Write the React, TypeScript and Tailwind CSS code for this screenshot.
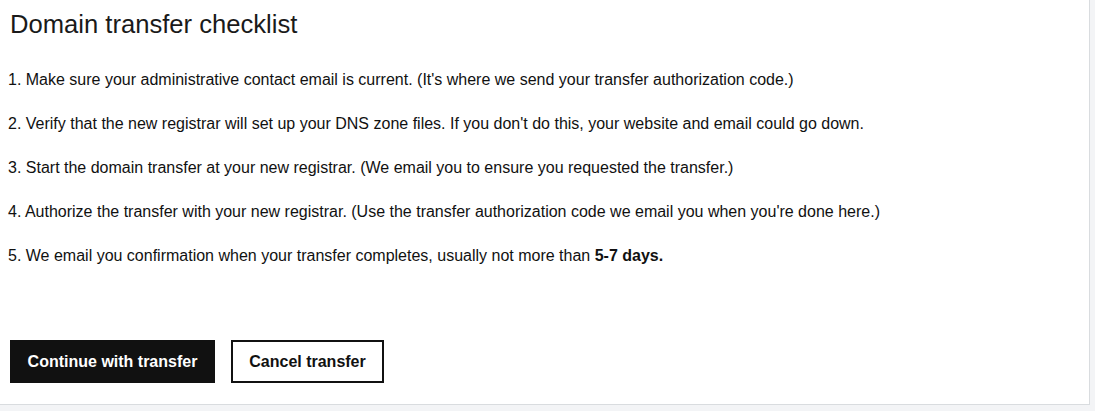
export default function App() {
  const font = { fontFamily: '"Liberation Sans", Arial, sans-serif' };
  return (
    <div className="w-[1095px] h-[411px] bg-[#f3f4f6] overflow-hidden text-[#111]" style={font}>
      <div className="w-[1090px] h-[405px] bg-white border-r border-b border-[#d9dcdf] flex flex-col">
        <h1 className="pl-[10px] pt-[9px] text-[25.6px] leading-[30px] font-normal text-[#1a1a1a]">
          Domain transfer checklist
        </h1>
        <ol className="pl-[8px] mt-[29px] flex flex-col gap-[20px] text-[16px] leading-[24px]">
          <li>1. Make sure your administrative contact email is current. (It's where we send your transfer authorization code.)</li>
          <li>2. Verify that the new registrar will set up your DNS zone files. If you don't do this, your website and email could go down.</li>
          <li>3. Start the domain transfer at your new registrar. (We email you to ensure you requested the transfer.)</li>
          <li>4. Authorize the transfer with your new registrar. (Use the transfer authorization code we email you when you're done here.)</li>
          <li>
            5. We email you confirmation when your transfer completes, usually not more than <b>5-7 days.</b>
          </li>
        </ol>
        <div className="mt-[72px] pl-[10px] flex gap-[16px]">
          <button className="h-[43px] w-[205px] bg-[#111] text-white font-bold text-[16px]">
            Continue with transfer
          </button>
          <button className="h-[43px] w-[153px] border-2 border-[#111] bg-white text-[#111] font-bold text-[16px]">
            Cancel transfer
          </button>
        </div>
      </div>
    </div>
  );
}
